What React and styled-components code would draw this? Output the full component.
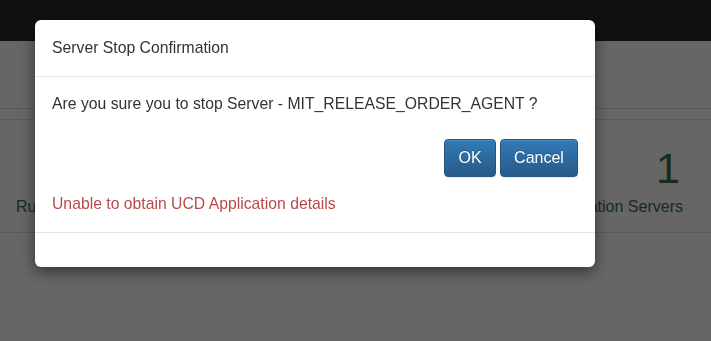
import styled, { createGlobalStyle } from "styled-components";

const GlobalStyle = createGlobalStyle`
  html, body {
    margin: 0;
    padding: 0;
    background: #ffffff;
    font-family: "Liberation Sans", Arial, sans-serif;
    color: #333333;
  }
  * {
    box-sizing: border-box;
  }
`;

const Page = styled.div`
  width: 100%;
  height: 341px;
  overflow: hidden;
  background: #ffffff;
`;

const Navbar = styled.div`
  height: 41px;
  background: #2a2a2a;
`;

const Toolbar = styled.div`
  height: 68px;
  border-bottom: 1px solid #dddddd;
`;

const Spacer = styled.div`
  height: 11px;
  border-bottom: 1px solid #dddddd;
`;

const StatsPanel = styled.div`
  display: grid;
  grid-template-columns: 1fr 1fr 1fr;
  height: 113px;
  border-bottom: 1px solid #dddddd;
  padding: 0 28px 0 16px;
`;

const Stat = styled.div`
  display: flex;
  flex-direction: column;
  align-items: ${(p) => (p.$right ? "flex-end" : "flex-start")};
  color: #3b7043;
`;

const StatNumber = styled.div`
  font-size: 43px;
  line-height: 42px;
  height: 42px;
  margin-top: 27px;
  padding-right: 3px;
`;

const StatLabel = styled.div`
  font-size: 16px;
  line-height: 20px;
  margin-top: 8px;
`;

const Backdrop = styled.div`
  position: fixed;
  inset: 0;
  background: rgba(0, 0, 0, 0.6);
`;

const Dialog = styled.div`
  position: absolute;
  top: 20px;
  left: 35px;
  width: 560px;
  background: #ffffff;
  border-radius: 6px;
  box-shadow: 0 5px 15px rgba(0, 0, 0, 0.5);
  overflow: hidden;
`;

const DialogHeader = styled.div`
  padding: 15px 17px 16px;
  border-bottom: 1px solid #e5e5e5;
`;

const Title = styled.h4`
  margin: 0;
  font-size: 15.75px;
  font-weight: normal;
  line-height: 25px;
  color: #333333;
`;

const DialogBody = styled.div`
  padding: 15px 17px 17px;
`;

const Message = styled.p`
  margin: 0 0 24px;
  font-size: 15.75px;
  line-height: 23px;
`;

const Actions = styled.div`
  display: flex;
  justify-content: flex-end;
  gap: 4px;
  margin-bottom: 15px;
`;

const Button = styled.button`
  font-family: inherit;
  font-size: 16px;
  line-height: 22px;
  padding: 7px 12px;
  min-width: ${(p) => p.$width}px;
  color: #ffffff;
  border: 1px solid #245580;
  border-radius: 4px;
  background-image: linear-gradient(to bottom, #337ab7 0%, #265a88 100%);
  text-shadow: 0 -1px 0 rgba(0, 0, 0, 0.2);
  box-shadow: inset 0 1px 0 rgba(255, 255, 255, 0.15), 0 1px 1px rgba(0, 0, 0, 0.075);
  cursor: pointer;
`;

const ErrorText = styled.div`
  font-size: 15.75px;
  line-height: 23px;
  color: #b94a48;
`;

const DialogFooter = styled.div`
  height: 35px;
  border-top: 1px solid #e5e5e5;
`;

const App = () => {
  return (
    <Page>
      <GlobalStyle />
      <Navbar />
      <Toolbar />
      <Spacer />
      <StatsPanel>
        <Stat>
          <StatNumber>&nbsp;</StatNumber>
          <StatLabel>Running</StatLabel>
        </Stat>
        <Stat />
        <Stat $right>
          <StatNumber>1</StatNumber>
          <StatLabel>Application Servers</StatLabel>
        </Stat>
      </StatsPanel>
      <Backdrop>
        <Dialog>
          <DialogHeader>
            <Title>Server Stop Confirmation</Title>
          </DialogHeader>
          <DialogBody>
            <Message>
              Are you sure you to stop Server - MIT_RELEASE_ORDER_AGENT ?
            </Message>
            <Actions>
              <Button $width={52}>OK</Button>
              <Button $width={78}>Cancel</Button>
            </Actions>
            <ErrorText>Unable to obtain UCD Application details</ErrorText>
          </DialogBody>
          <DialogFooter />
        </Dialog>
      </Backdrop>
    </Page>
  );
};

export default App;
